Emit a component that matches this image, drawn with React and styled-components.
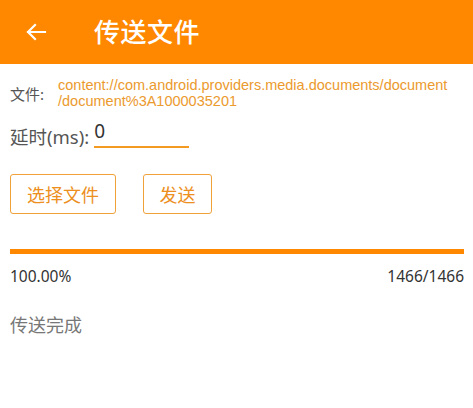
import React from "react";
import styled, { createGlobalStyle } from "styled-components";

const Global = createGlobalStyle`
  html, body { margin: 0; padding: 0; background: #fff; }
  body { font-family: "Noto Sans", "Noto Sans CJK SC", sans-serif; }
`;

const Page = styled.div`
  width: 473px;
  height: 408px;
  background: #fff;
  display: flex;
  flex-direction: column;
`;

const Toolbar = styled.header`
  height: 64px;
  background: #ff8800;
  display: flex;
  align-items: center;
  padding-left: 24px;
  box-sizing: border-box;
`;

const Back = styled.svg`
  width: 24px;
  height: 24px;
  margin-right: 46px;
`;

const Title = styled.h1`
  margin: 0;
  color: #fff;
  font-size: 26px;
  font-weight: 500;
  font-family: "Noto Sans CJK SC", sans-serif;
  letter-spacing: 0.5px;
  margin-top: -4px;
`;

const Content = styled.div`
  padding: 14px 9px 0 10px;
  display: flex;
  flex-direction: column;
`;

const FileRow = styled.div`
  display: flex;
  align-items: center;
`;

const Label = styled.span`
  color: #555;
  font-size: ${(p) => p.$size || 15}px;
  line-height: 1.2;
  font-family: "Noto Sans", "Noto Sans CJK SC", sans-serif;
  white-space: nowrap;
`;

const Url = styled.div`
  display: flex;
  flex-direction: column;
  color: #eb9a2e;
  font-size: 14.5px;
  line-height: 15.5px;
  margin-left: 14px;
  font-family: "Liberation Sans", Arial, sans-serif;
  white-space: nowrap;
`;

const DelayRow = styled.div`
  display: flex;
  align-items: flex-end;
  margin-top: 11px;
`;

const Input = styled.div`
  width: 95px;
  margin-left: 5px;
  border-bottom: 2px solid #f39a22;
  color: #333;
  font-size: 19px;
  line-height: 22px;
  padding-bottom: 4px;
  font-family: "Noto Sans", sans-serif;
`;

const Buttons = styled.div`
  display: flex;
  gap: 27px;
  margin-top: 26px;
`;

const Button = styled.button`
  width: ${(p) => p.$w}px;
  height: 40px;
  border: 1.5px solid #f0a23a;
  border-radius: 3px;
  background: #fff;
  color: #ec8f1e;
  font-size: 18px;
  font-family: "Noto Sans CJK SC", sans-serif;
  padding: 0;
  box-sizing: border-box;
`;

const Bar = styled.div`
  margin-top: 35px;
  height: 5px;
  background: #ff8800;
`;

const Stats = styled.div`
  display: flex;
  justify-content: space-between;
  margin-top: 12px;
  color: #333;
  font-size: 15.5px;
  line-height: 21px;
  font-family: "Noto Sans", sans-serif;
`;

const Status = styled.div`
  margin-top: 25px;
  color: #777;
  font-size: 18px;
  line-height: 25px;
  font-family: "Noto Sans CJK SC", sans-serif;
`;

export default function App() {
  return (
    <Page>
      <Global />
      <Toolbar>
        <Back viewBox="0 0 24 24" fill="none" stroke="#fff" strokeWidth="2.2" strokeLinecap="square">
          <path d="M21 12H4M11 5l-7 7 7 7" />
        </Back>
        <Title>传送文件</Title>
      </Toolbar>
      <Content>
        <FileRow>
          <Label $size={15}>文件:</Label>
          <Url>
            <span>content://com.android.providers.media.documents/document</span>
            <span>/document%3A1000035201</span>
          </Url>
        </FileRow>
        <DelayRow>
          <Label $size={18.5}>延时(ms):</Label>
          <Input>0</Input>
        </DelayRow>
        <Buttons>
          <Button $w={106}>选择文件</Button>
          <Button $w={69}>发送</Button>
        </Buttons>
        <Bar />
        <Stats>
          <span>100.00%</span>
          <span>1466/1466</span>
        </Stats>
        <Status>传送完成</Status>
      </Content>
    </Page>
  );
}
